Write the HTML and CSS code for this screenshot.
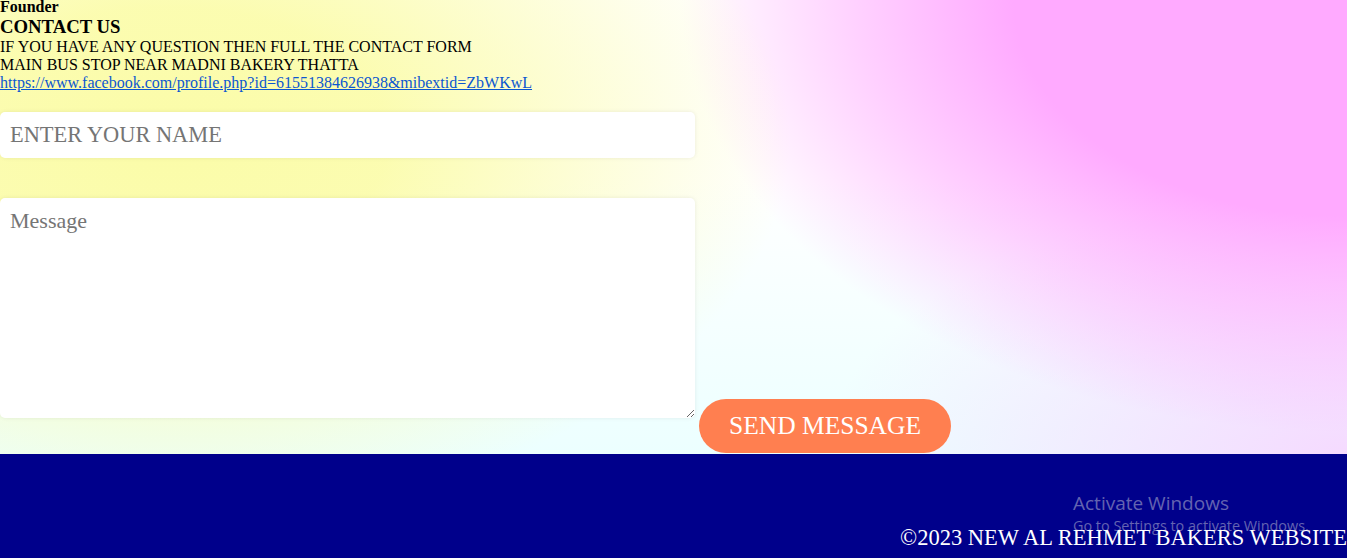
FILE: index.html
```html
<!DOCTYPE html>
<html>
<head>
<meta charset="utf-8">
<link rel="stylesheet" href="styles.css">
</head>
<body>
<main class="page">
  <section class="contact">
    <div class="founder">Founder</div>
    <div class="title">CONTACT US</div>
    <div class="line">IF YOU HAVE ANY QUESTION THEN FULL THE CONTACT FORM</div>
    <div class="line">MAIN BUS STOP NEAR MADNI BAKERY THATTA</div>
    <div class="line"><a href="#" class="fb">https://www.facebook.com/profile.php?id=61551384626938&amp;mibextid=ZbWKwL</a></div>
  </section>
  <form class="form">
    <input class="name" type="text" placeholder="ENTER YOUR NAME">
    <div class="row">
      <textarea class="msg" placeholder="Message"></textarea>
      <button class="send" type="button">SEND MESSAGE</button>
    </div>
  </form>
</main>
<footer class="footer">
  <p class="copy">©2023 NEW AL REHMET BAKERS WEBSITE</p>
  <div class="watermark">
    <div class="wm-title">Activate Windows</div>
    <div class="wm-sub">Go to Settings to activate Windows.</div>
  </div>
</footer>
</body>
</html>
```
FILE: styles.css
```css
html, body {
  margin: 0;
  padding: 0;
}
body {
  font-family: "Liberation Serif", "Times New Roman", serif;
  color: #000;
  width: 1347px;
  height: 558px;
  overflow: hidden;
}
.page {
  display: flow-root;
  height: 454px;
  background:
    radial-gradient(ellipse 620px 380px at 170px 140px, rgba(251,252,168,1) 0%, rgba(251,252,168,0.9) 35%, rgba(251,252,168,0) 100%),
    radial-gradient(ellipse 740px 480px at 1347px 0px, #ffaaff 0%, #ffaaff 45%, rgba(255,170,255,0.55) 66%, rgba(255,170,255,0) 90%),
    radial-gradient(ellipse 520px 260px at 1347px 454px, rgba(246,214,255,0.9) 0%, rgba(246,214,255,0) 100%),
    linear-gradient(to bottom, #ffffff 40%, #ecffff 100%);
}
.contact {
  margin-top: -2px;
}
.founder {
  font-weight: bold;
  font-size: 16px;
}
.title {
  font-weight: bold;
  font-size: 18.72px;
}
.line {
  font-size: 16px;
}
.fb {
  color: #0b57d0;
}
.form {
  margin-top: 20px;
  display: flex;
  flex-direction: column;
  align-items: flex-start;
}
.name, .msg {
  box-sizing: border-box;
  width: 695px;
  border: none;
  border-radius: 5px;
  background: #fff;
  box-shadow: 0 0 4px rgba(0,0,0,0.08);
  font-family: "Liberation Serif", "Times New Roman", serif;
  padding: 0 10px;
  outline: none;
  margin: 0;
}
.name {
  height: 46px;
  font-size: 22.4px;
}
.name::placeholder, .msg::placeholder {
  color: #757575;
}
.row {
  margin-top: 40px;
  display: flex;
  align-items: flex-end;
  gap: 4px;
}
.msg {
  height: 220px;
  font-size: 22px;
  padding-top: 10px;
  margin-bottom: 35px;
}
.send {
  width: 252px;
  height: 54px;
  border: none;
  border-radius: 27px;
  background: #ff7f50;
  color: #fff;
  font-family: "Liberation Serif", "Times New Roman", serif;
  font-size: 25.5px;
  padding: 0;
}
.footer {
  position: relative;
  height: 104px;
  background: #00008b;
  display: flex;
  justify-content: flex-end;
  align-items: flex-end;
}
.copy {
  margin: 0 0 7px 0;
  color: #fff;
  font-size: 22.5px;
  white-space: nowrap;
  position: relative;
  z-index: 1;
}
.watermark {
  position: absolute;
  left: 1073px;
  top: 36px;
  font-family: "Open Sans", "Noto Sans", sans-serif;
  color: rgba(200,200,215,0.5);
}
.wm-title {
  font-size: 19px;
  line-height: 26px;
}
.wm-sub {
  font-size: 14.4px;
  line-height: 20px;
}
```
